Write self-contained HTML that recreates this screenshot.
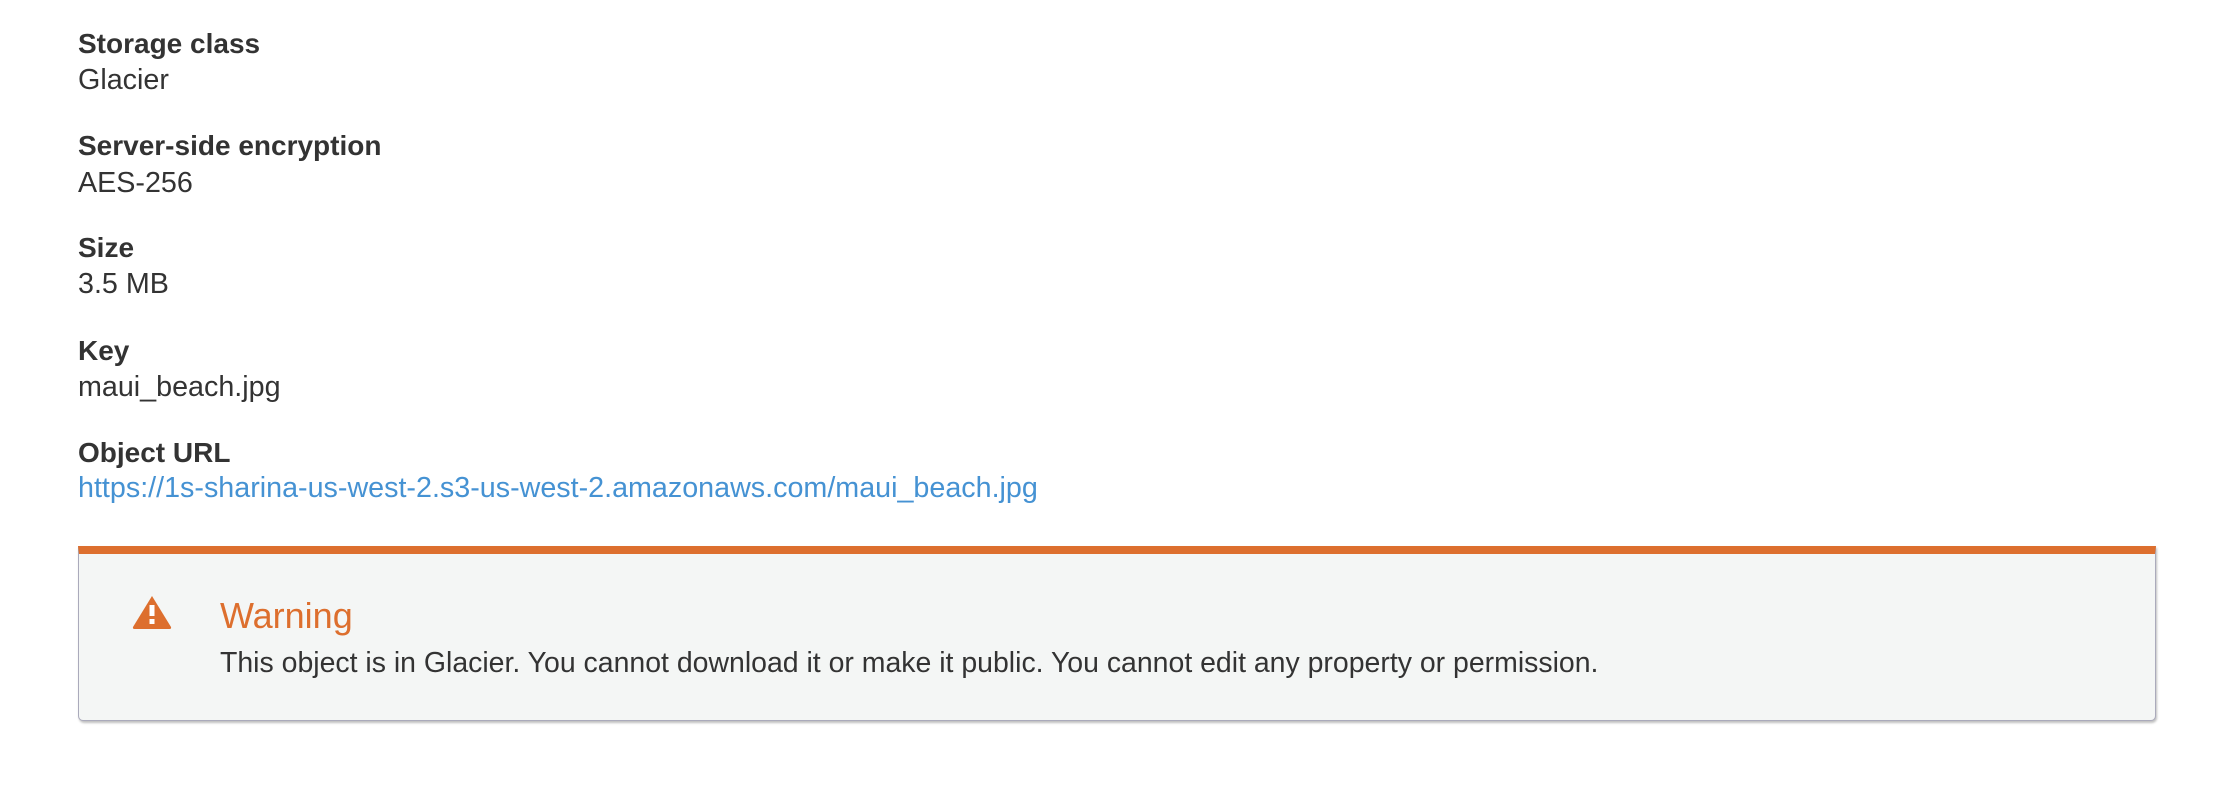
<!DOCTYPE html>
<html><head><style>
html,body{margin:0;padding:0;background:#fff;width:2214px;height:804px;overflow:hidden;font-family:"Liberation Sans",Arial,sans-serif;color:#333;}
.t{position:absolute;left:78px;font-size:28.7px;line-height:36px;white-space:nowrap;}
.b{font-weight:bold;font-size:28px;}
a{color:#4592d3;text-decoration:none;}
.box{position:absolute;left:78px;top:546px;width:2078px;height:175px;box-sizing:border-box;background:#f4f6f5;border:1px solid #aab;border-top:8px solid #dd6f2e;border-radius:0 0 5px 5px;box-shadow:1px 2px 2px rgba(0,0,0,.25);}
</style></head><body>
<div class="t b" style="top:26px">Storage class</div>
<div class="t" style="top:62px">Glacier</div>
<div class="t b" style="top:128px">Server-side encryption</div>
<div class="t" style="top:165px">AES-256</div>
<div class="t b" style="top:230px">Size</div>
<div class="t" style="top:266px">3.5 MB</div>
<div class="t b" style="top:333px">Key</div>
<div class="t" style="top:369px">maui_beach.jpg</div>
<div class="t b" style="top:435px">Object URL</div>
<div class="t" style="top:470px"><a>https://1s-sharina-us-west-2.s3-us-west-2.amazonaws.com/maui_beach.jpg</a></div>
<div class="box"></div>
<svg style="position:absolute;left:132px;top:595px" width="40" height="35" viewBox="0 0 40 35">
<path d="M20 1 L39 32 Q39.5 34 37.5 34 L2.5 34 Q0.5 34 1 32 Z" fill="#dd6f2e"/>
<rect x="17.5" y="10" width="5" height="11" fill="#fff"/>
<rect x="17.5" y="24" width="5" height="5" fill="#fff"/>
</svg>
<div style="position:absolute;left:220px;top:594px;font-size:36px;line-height:44px;color:#dd6f2e;">Warning</div>
<div class="t" style="left:220px;top:645px;font-size:28.45px">This object is in Glacier. You cannot download it or make it public. You cannot edit any property or permission.</div>
</body></html>
